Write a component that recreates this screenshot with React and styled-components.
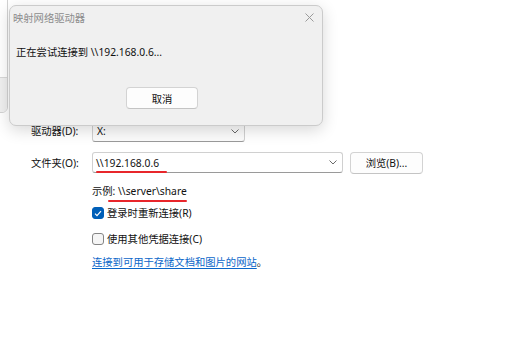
import React from 'react'
import styled, { createGlobalStyle } from 'styled-components'

const GlobalStyle = createGlobalStyle`
  body {
    margin: 0;
    background: #fff;
    font-family: "Noto Sans", "Noto Sans CJK SC", sans-serif;
    font-size: 10.3px;
    color: #111;
  }
`

const Page = styled.div`
  position: relative;
  box-sizing: border-box;
  width: 511px;
  height: 348px;
  padding: 120px 0 0 31px;
  overflow: hidden;
  background: #fff;
`

const BackWindow = styled.div`
  position: absolute;
  left: -12px;
  top: -10px;
  width: 20px;
  height: 123px;
  box-sizing: border-box;
  display: flex;
  flex-direction: column;
  border: 1px solid #d2d2d2;
  border-radius: 6px;
  background: #fff;
  overflow: hidden;
`

const BackFooter = styled.div`
  margin-top: auto;
  height: 34px;
  border-top: 1px solid #d8d8d8;
  background: #f0f0f0;
`

const Dialog = styled.div`
  position: absolute;
  left: 9px;
  top: 5px;
  width: 314px;
  height: 121px;
  box-sizing: border-box;
  display: flex;
  flex-direction: column;
  border: 1px solid #cbcbcb;
  border-radius: 7px;
  background: #f0f0f0;
  box-shadow: 0 4px 16px rgba(0, 0, 0, 0.16);
`

const TitleBar = styled.div`
  height: 22px;
  display: flex;
  align-items: center;
  justify-content: space-between;
  padding: 0 8px 0 3px;
  color: #8c8c8c;
`

const CloseIcon = () => (
  <svg width="9" height="9" viewBox="0 0 9 9">
    <path d="M0.5 0.5 L8.5 8.5 M8.5 0.5 L0.5 8.5" stroke="#9a9a9a" strokeWidth="1" fill="none" />
  </svg>
)

const Message = styled.div`
  margin-top: 16px;
  padding-left: 6px;
  line-height: 16px;
`

const DialogFooter = styled.div`
  display: flex;
  margin-top: 27px;
  padding-left: 116px;
`

const Button = styled.button`
  box-sizing: border-box;
  width: ${p => p.w}px;
  height: 22px;
  margin-left: ${p => p.ml || 0}px;
  padding: 0;
  border: 1px solid #d3d3d3;
  border-bottom-color: #c4c4c4;
  border-radius: 4px;
  background: #fdfdfd;
  font: inherit;
  color: #111;
`

const Form = styled.div`
  display: flex;
  flex-direction: column;
`

const Row = styled.div`
  display: flex;
  align-items: ${p => p.top ? 'flex-start' : 'center'};
  margin-top: ${p => p.mt || 0}px;
  line-height: 16px;
`

const Label = styled.div`
  width: 61px;
  flex: none;
  align-self: center;
`

const Field = styled.div`
  box-sizing: border-box;
  width: ${p => p.w}px;
  height: ${p => p.h}px;
  display: flex;
  align-items: center;
  justify-content: space-between;
  padding: 0 5px 0 ${p => p.pl}px;
  border: 1px solid #d0d0d0;
  border-bottom-color: #9a9a9a;
  border-radius: 3px;
  background: ${p => p.bg || '#fff'};
`

const Chevron = () => (
  <svg width="8" height="5" viewBox="0 0 8 5">
    <path d="M0.5 0.5 L4 4 L7.5 0.5" stroke="#6a6a6a" strokeWidth="1" fill="none" />
  </svg>
)

const Marked = styled.span`
  position: relative;

  &::after {
    content: '';
    position: absolute;
    left: ${p => p.l}px;
    right: ${p => p.r}px;
    bottom: ${p => p.b}px;
    height: 2px;
    border-radius: 1px;
    background: #e8262b;
  }
`

const Indented = styled.div`
  margin-left: 61px;
  display: flex;
  align-items: center;
  line-height: 16px;
  margin-top: ${p => p.mt}px;
`

const Box = styled.span`
  box-sizing: border-box;
  width: 12px;
  height: 12px;
  margin-right: 3px;
  display: inline-flex;
  align-items: center;
  justify-content: center;
  border-radius: 3px;
  border: 1px solid ${p => p.checked ? '#005fb8' : '#858585'};
  background: ${p => p.checked ? '#005fb8' : '#f5f5f5'};
`

const Check = () => (
  <svg width="8" height="7" viewBox="0 0 8 7">
    <path d="M1 3.6 L3 5.6 L7 1.2" stroke="#fff" strokeWidth="1.2" fill="none" />
  </svg>
)

const Link = styled.a`
  color: #0a66c9;
  text-decoration: underline;
  text-underline-offset: 2px;
`

export default function App() {
  return (
    <Page>
      <GlobalStyle />
      <Form>
        <Row>
          <Label>驱动器(D):</Label>
          <Field w={153} h={22} pl={4} bg="#fbfbfb">
            <span>X:</span>
            <Chevron />
          </Field>
        </Row>
        <Row top mt={10}>
          <Label>文件夹(O):</Label>
          <Field w={251} h={21} pl={3}>
            <Marked l={0} r={-8} b={-2}>\\192.168.0.6</Marked>
            <Chevron />
          </Field>
          <Button w={73} ml={7}>浏览(B)...</Button>
        </Row>
        <Indented mt={9}>
          <Marked l={16} r={0} b={-3}>示例: \\server\share</Marked>
        </Indented>
        <Indented mt={6}>
          <Box checked><Check /></Box>
          登录时重新连接(R)
        </Indented>
        <Indented mt={10}>
          <Box />
          使用其他凭据连接(C)
        </Indented>
        <Indented mt={7}>
          <Link href="#">连接到可用于存储文档和图片的网站</Link>。
        </Indented>
      </Form>

      <BackWindow>
        <BackFooter />
      </BackWindow>

      <Dialog>
        <TitleBar>
          <span>映射网络驱动器</span>
          <CloseIcon />
        </TitleBar>
        <Message>正在尝试连接到 \\192.168.0.6...</Message>
        <DialogFooter>
          <Button w={72}>取消</Button>
        </DialogFooter>
      </Dialog>
    </Page>
  )
}
